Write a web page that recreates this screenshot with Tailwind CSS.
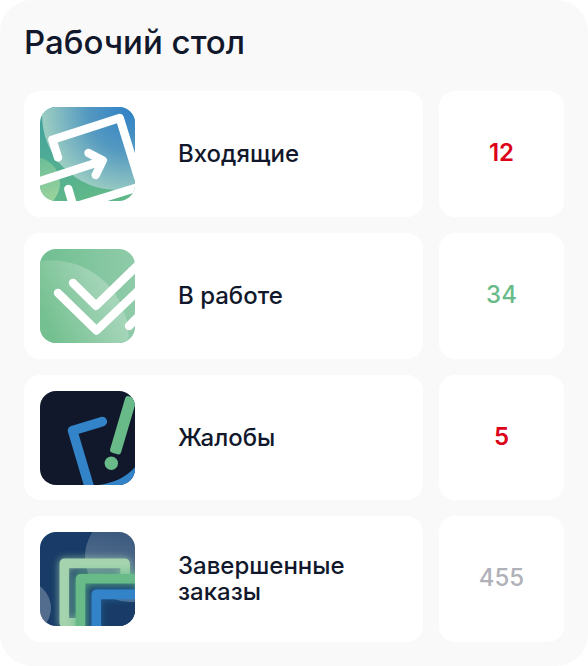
<!DOCTYPE html>
<html lang="ru">

<head>
    <meta charset="UTF-8">
    <meta name="viewport" content="width=device-width, initial-scale=1.0">
    <title>Рабочий стол</title>
    <script src="https://cdn.jsdelivr.net/npm/@tailwindcss/browser@4"></script>
</head>

<body class="bg-white font-['Inter','Noto_Sans',sans-serif] text-[#12182b]">
    <main class="bg-[#f9f9f9] rounded-[32px] px-6 pt-5 pb-6">
        <h1 class="text-[33px] leading-11 font-medium mb-[27px]">Рабочий стол</h1>

        <ul class="flex flex-col gap-4">
            <!-- Incoming -->
            <li class="flex gap-4 h-[126px]">
                <div class="flex-1 flex items-center bg-white rounded-2xl pl-4 pr-4">
                    <svg class="w-[95px] h-[94px] rounded-2xl shrink-0 mr-[43px]" viewBox="0 0 95 94" fill="none" aria-hidden="true">
                        <defs>
                            <linearGradient id="inBg" x1="0" y1="0" x2="0.3" y2="1">
                                <stop stop-color="#3d9f9f" />
                                <stop offset="1" stop-color="#5fb78a" />
                            </linearGradient>
                            <radialGradient id="inBig" gradientUnits="userSpaceOnUse" cx="90" cy="2" r="86">
                                <stop stop-color="#2f80c6" />
                                <stop offset="0.5" stop-color="#5499c0" />
                                <stop offset="1" stop-color="#9accc2" />
                            </radialGradient>
                            <linearGradient id="inSmall" gradientUnits="userSpaceOnUse" x1="0" y1="50" x2="10" y2="94">
                                <stop stop-color="#6abd98" />
                                <stop offset="1" stop-color="#9ad39c" />
                            </linearGradient>
                        </defs>
                        <rect width="95" height="94" fill="url(#inBg)" />
                        <circle cx="77" cy="8" r="75" fill="url(#inBig)" />
                        <circle cx="-6" cy="76" r="26" fill="url(#inSmall)" />
                        <g stroke="#fff" stroke-width="8.4" stroke-linecap="round" stroke-linejoin="round">
                            <path d="M18 50.5L12.4 32.8L79.7 11L98 70" />
                            <path d="M-4 75.5L62 54M48.5 46L62.8 53.5L55.7 68" />
                            <path d="M28.3 82L33 98M40 98L99 80" />
                        </g>
                    </svg>
                    <p class="text-2xl leading-[26px] font-medium">Входящие</p>
                </div>
                <div class="w-[125px] flex items-center justify-center bg-white rounded-2xl pb-0.5 text-2xl font-semibold text-[#dc0019]">12</div>
            </li>

            <!-- In progress -->
            <li class="flex gap-4 h-[126px]">
                <div class="flex-1 flex items-center bg-white rounded-2xl pl-4 pr-4">
                    <svg class="w-[95px] h-[94px] rounded-2xl shrink-0 mr-[43px]" viewBox="0 0 95 94" fill="none" aria-hidden="true">
                        <defs>
                            <linearGradient id="workBg" x1="0" y1="0" x2="1" y2="0">
                                <stop stop-color="#70bf91" />
                                <stop offset="1" stop-color="#90cba9" />
                            </linearGradient>
                            <linearGradient id="workBig" gradientUnits="userSpaceOnUse" x1="8" y1="80" x2="72" y2="50">
                                <stop stop-color="#74c090" />
                                <stop offset="1" stop-color="#a5d5b9" />
                            </linearGradient>
                        </defs>
                        <rect width="95" height="94" fill="url(#workBg)" />
                        <circle cx="12" cy="88" r="76.5" fill="url(#workBig)" />
                        <g stroke="#fff" stroke-width="8.4" stroke-linecap="round" stroke-linejoin="round">
                            <path d="M33 34L56 56.8L99 15" />
                            <path d="M18 44L56.5 81.5L99 41" />
                            <path d="M89 77L99 67" />
                        </g>
                    </svg>
                    <p class="text-2xl leading-[26px] font-medium">В работе</p>
                </div>
                <div class="w-[125px] flex items-center justify-center bg-white rounded-2xl pb-0.5 text-2xl font-medium text-[#68bb89]">34</div>
            </li>

            <!-- Complaints -->
            <li class="flex gap-4 h-[125px]">
                <div class="flex-1 flex items-center bg-white rounded-2xl pl-4 pr-4">
                    <svg class="w-[95px] h-[94px] rounded-2xl shrink-0 mr-[43px]" viewBox="0 0 95 94" fill="none" aria-hidden="true">
                        <rect width="95" height="94" fill="#12182b" />
                        <g stroke="#3283c8" stroke-width="9.6" stroke-linecap="round" stroke-linejoin="round">
                            <path d="M62.3 30.6L32.6 39.6L50.5 100" />
                            <path d="M58 99C76 96 88 91 98 80" />
                        </g>
                        <rect x="-5.7" y="-59" width="11.4" height="59" rx="3" transform="translate(74.8 62.6) rotate(16.4)" fill="#68bb89" />
                        <circle cx="71.3" cy="72.3" r="6.7" fill="#68bb89" />
                    </svg>
                    <p class="text-2xl leading-[26px] font-medium">Жалобы</p>
                </div>
                <div class="w-[125px] flex items-center justify-center bg-white rounded-2xl pb-0.5 text-2xl font-semibold text-[#dc0019]">5</div>
            </li>

            <!-- Completed orders -->
            <li class="flex gap-4 h-[126px]">
                <div class="flex-1 flex items-center bg-white rounded-2xl pl-4 pr-4">
                    <svg class="w-[95px] h-[94px] rounded-2xl shrink-0 mr-[43px]" viewBox="0 0 95 94" fill="none" aria-hidden="true">
                        <defs>
                            <linearGradient id="doneBig" gradientUnits="userSpaceOnUse" x1="85" y1="-10" x2="70" y2="70">
                                <stop stop-color="#fff" stop-opacity="0.12" />
                                <stop offset="1" stop-color="#fff" stop-opacity="0.35" />
                            </linearGradient>
                            <filter id="glow" x="-30%" y="-30%" width="160%" height="160%">
                                <feGaussianBlur stdDeviation="3.6" />
                            </filter>
                        </defs>
                        <rect width="95" height="94" fill="#183c67" />
                        <circle cx="90" cy="25" r="45" fill="url(#doneBig)" />
                        <circle cx="-16" cy="76" r="27" fill="#fff" fill-opacity="0.25" />
                        <g stroke-width="9.6" stroke-linejoin="round">
                            <rect x="24.3" y="31.4" width="60.8" height="59.4" stroke="#a4d3ae" stroke-width="12" filter="url(#glow)" opacity="0.6" />
                            <rect x="24.3" y="31.4" width="60.8" height="59.4" stroke="#a4d3ae" />
                            <rect x="40.5" y="46.8" width="62" height="60" fill="#183c67" />
                            <rect x="40.5" y="46.8" width="62" height="60" stroke="#68bb89" stroke-width="14" filter="url(#glow)" opacity="0.7" />
                            <rect x="40.5" y="46.8" width="62" height="60" stroke="#68bb89" />
                            <rect x="56.3" y="62.4" width="62" height="60" fill="#183c67" />
                            <path d="M61 59.5A45 45 0 0 0 119 59.5Z" fill="#fff" fill-opacity="0.25" />
                            <rect x="56.3" y="62.4" width="62" height="60" stroke="#3283c8" filter="url(#glow)" opacity="0.5" />
                            <rect x="56.3" y="62.4" width="62" height="60" stroke="#3283c8" />
                        </g>
                    </svg>
                    <p class="text-2xl leading-[26px] font-medium">Завершенные заказы</p>
                </div>
                <div class="w-[125px] flex items-center justify-center bg-white rounded-2xl pb-0.5 text-2xl font-medium text-[#b0b1b9]">455</div>
            </li>
        </ul>
    </main>
</body>

</html>
